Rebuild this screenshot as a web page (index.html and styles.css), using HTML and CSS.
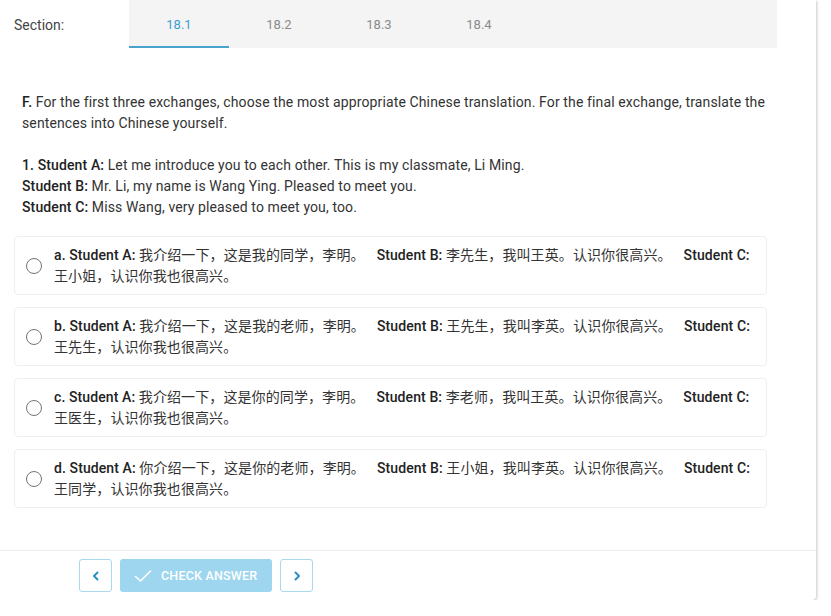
FILE: index.html
```html
<!DOCTYPE html>
<html lang="en">
<head>
<meta charset="UTF-8">
<meta name="viewport" content="width=device-width, initial-scale=1.0">
<title>Section 18.1</title>
<link rel="stylesheet" href="styles.css">
</head>
<body>
<div class="card">
  <div class="header">
    <div class="section-label">Section:</div>
    <div class="tabs">
      <div class="tab active">18.1</div>
      <div class="tab">18.2</div>
      <div class="tab">18.3</div>
      <div class="tab">18.4</div>
    </div>
  </div>

  <div class="content">
    <div class="question">
      <p><b>F.</b> For the first three exchanges, choose the most appropriate Chinese translation. For the final exchange, translate the sentences into Chinese yourself.</p>
      <p>
        <b>1. Student A:</b> Let me introduce you to each other. This is my classmate, Li Ming.<br>
        <b>Student B:</b> Mr. Li, my name is Wang Ying. Pleased to meet you.<br>
        <b>Student C:</b> Miss Wang, very pleased to meet you, too.
      </p>
    </div>

    <div class="options">
      <label class="option">
        <span class="radio"></span>
        <span class="option-text"><b>a. Student A:</b> 我介绍一下，这是我的同学，李明。<span class="sep"></span><b>Student B:</b> 李先生，我叫王英。认识你很高兴。<span class="sep"></span><b>Student C:</b> 王小姐，认识你我也很高兴。</span>
      </label>
      <label class="option">
        <span class="radio"></span>
        <span class="option-text"><b>b. Student A:</b> 我介绍一下，这是我的老师，李明。<span class="sep"></span><b>Student B:</b> 王先生，我叫李英。认识你很高兴。<span class="sep"></span><b>Student C:</b> 王先生，认识你我也很高兴。</span>
      </label>
      <label class="option">
        <span class="radio"></span>
        <span class="option-text"><b>c. Student A:</b> 我介绍一下，这是你的同学，李明。<span class="sep"></span><b>Student B:</b> 李老师，我叫王英。认识你很高兴。<span class="sep"></span><b>Student C:</b> 王医生，认识你我也很高兴。</span>
      </label>
      <label class="option">
        <span class="radio"></span>
        <span class="option-text"><b>d. Student A:</b> 你介绍一下，这是你的老师，李明。<span class="sep"></span><b>Student B:</b> 王小姐，我叫李英。认识你很高兴。<span class="sep"></span><b>Student C:</b> 王同学，认识你我也很高兴。</span>
      </label>
    </div>
  </div>

  <div class="footer">
    <button class="nav-btn" aria-label="Previous">
      <svg width="12" height="12" viewBox="0 0 12 12"><path d="M7.5 2.5 L4 6 L7.5 9.5" fill="none" stroke="#2b8fc2" stroke-width="2" stroke-linecap="round" stroke-linejoin="round"/></svg>
    </button>
    <button class="check-btn" disabled>
      <svg width="18" height="14" viewBox="0 0 18 14"><path d="M1.5 7.5 L6.5 12 L16.5 2" fill="none" stroke="#fff" stroke-width="1.6" stroke-linecap="round" stroke-linejoin="round"/></svg>
      CHECK ANSWER
    </button>
    <button class="nav-btn" aria-label="Next">
      <svg width="12" height="12" viewBox="0 0 12 12"><path d="M4.5 2.5 L8 6 L4.5 9.5" fill="none" stroke="#2b8fc2" stroke-width="2" stroke-linecap="round" stroke-linejoin="round"/></svg>
    </button>
  </div>
</div>
</body>
</html>
```

FILE: styles.css
```css
body {
  margin: 0;
  background: #fff;
  color: #333;
  font-family: Roboto, "Noto Sans CJK SC", sans-serif;
  font-size: 14px;
}

.card {
  width: 816px;
  height: 600px;
  background: #fff;
  box-shadow: 1px 1px 3px rgba(0, 0, 0, 0.22);
  border-radius: 0 0 4px 0;
  display: flex;
  flex-direction: column;
}

.header {
  display: flex;
  height: 48px;
}

.section-label {
  width: 115px;
  padding-left: 14px;
  padding-top: 1px;
  display: flex;
  align-items: center;
  color: #444;
  font-size: 14px;
}

.tabs {
  display: flex;
  width: 648px;
  background: #f4f4f4;
}

.tab {
  width: 100px;
  display: flex;
  align-items: center;
  justify-content: center;
  font-size: 13px;
  color: #8a8a8a;
  border-bottom: 2px solid transparent;
  padding-top: 3px;
  box-sizing: border-box;
}

.tab.active {
  color: #3d9fd3;
  border-bottom-color: #4aa3cc;
}

.content {
  flex: 1;
  padding: 44px 49px 0 14px;
}

.question {
  padding-left: 8px;
  margin-right: -30px;
  line-height: 21px;
  letter-spacing: 0.12px;
}

.question p {
  margin: 0 0 21px 0;
}

.question b,
.option-text b {
  font-weight: 500;
  color: #222;
}

.options {
  margin-top: -3px;
}

.option {
  display: flex;
  align-items: center;
  gap: 12px;
  border: 1px solid #efefef;
  border-radius: 4px;
  padding: 8px 8px 7px 11px;
  margin-bottom: 12px;
  line-height: 21px;
}

.radio {
  flex: none;
  width: 14px;
  height: 14px;
  border: 1.6px solid #737373;
  border-radius: 50%;
}

.option-text {
  color: #333;
  letter-spacing: 0.1px;
}

.sep {
  display: inline-block;
  width: 12px;
}

.footer {
  height: 50px;
  border-top: 1px solid #ececec;
  display: flex;
  align-items: center;
  gap: 8px;
  padding-left: 79px;
  box-sizing: border-box;
}

.nav-btn {
  width: 33px;
  height: 33px;
  border: 1px solid #a9d9ee;
  border-radius: 3px;
  background: #fff;
  display: flex;
  align-items: center;
  justify-content: center;
  padding: 0;
}

.check-btn {
  height: 33px;
  width: 152px;
  border: none;
  border-radius: 3px;
  background: #9ed6ef;
  color: #fff;
  font-family: Roboto, sans-serif;
  font-size: 12.5px;
  font-weight: 500;
  letter-spacing: 0.2px;
  display: flex;
  align-items: center;
  gap: 9px;
  padding: 0 0 0 14px;
}
```
